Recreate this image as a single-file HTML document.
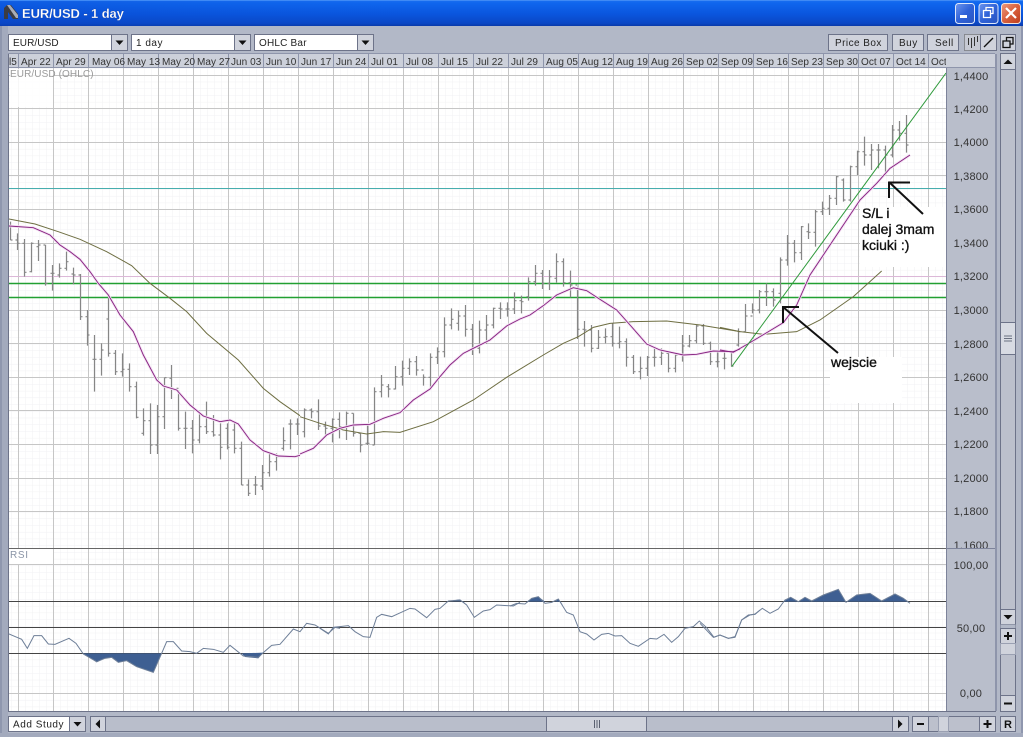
<!DOCTYPE html>
<html><head><meta charset="utf-8"><title>EUR/USD - 1 day</title>
<style>
html,body{margin:0;padding:0;width:1023px;height:737px;overflow:hidden;background:#b2b8c7}
svg{display:block}
text{font-family:"Liberation Sans",sans-serif;font-size:10px;fill:#222;letter-spacing:.1px}
.d text{letter-spacing:.05px;fill:#333}
.p text{font-size:11px;text-anchor:middle;letter-spacing:.2px;fill:#333}
.a text{font-size:14px;fill:#111;stroke:#111;stroke-width:.35px;letter-spacing:0}
.b{fill:#d0d3dc;stroke:#6d7389;stroke-width:1}
.w{fill:#fff;stroke:#6d7389;stroke-width:1}
</style></head><body>
<svg width="1023" height="737" viewBox="0 0 1023 737" xmlns="http://www.w3.org/2000/svg">
<defs>
<linearGradient id="tb" x1="0" y1="0" x2="0" y2="1"><stop offset="0" stop-color="#1b6ff0"/><stop offset=".12" stop-color="#0f66ee"/><stop offset=".55" stop-color="#0a55dd"/><stop offset=".9" stop-color="#0b47c4"/><stop offset="1" stop-color="#0a3aa8"/></linearGradient>
<linearGradient id="tb2" x1="0" y1="0" x2="1" y2="0"><stop offset="0" stop-color="#0a45c8" stop-opacity=".35"/><stop offset=".4" stop-color="#0a55dd" stop-opacity="0"/></linearGradient>
<linearGradient id="bl" x1="0" y1="0" x2="1" y2="1"><stop offset="0" stop-color="#6f97ee"/><stop offset=".5" stop-color="#2f62d8"/><stop offset="1" stop-color="#2a55c0"/></linearGradient>
<linearGradient id="rd" x1="0" y1="0" x2="1" y2="1"><stop offset="0" stop-color="#eb9a80"/><stop offset=".5" stop-color="#d8603c"/><stop offset="1" stop-color="#bd3c1c"/></linearGradient>
<pattern id="minor" x="11.5" y="75" width="7" height="6.72" patternUnits="userSpaceOnUse"><path d="M0 0V6.72M0 0H7" stroke="#f1f1f3" stroke-width="1" fill="none"/></pattern>
<clipPath id="main"><rect x="9" y="68" width="937" height="480"/></clipPath>
<clipPath id="rsi"><rect x="9" y="549" width="937" height="162"/></clipPath>
<clipPath id="ax"><rect x="9" y="54" width="937" height="14"/></clipPath>
<clipPath id="pl"><rect x="947" y="68" width="48" height="480"/></clipPath>
</defs>

<rect width="1023" height="737" fill="#b2b8c7"/>
<rect x="0" y="26" width="8" height="711" fill="#a3aabd"/>
<rect x="0" y="26" width="2" height="711" fill="#8f97ae"/>
<rect x="1021" y="26" width="2" height="711" fill="#8f97ae"/>
<rect x="0" y="733" width="1023" height="4" fill="#a3aabd"/>

<!-- title bar -->
<rect width="1023" height="26" fill="url(#tb)"/>
<rect width="1023" height="26" fill="url(#tb2)"/>
<rect y="0" width="1023" height="1" fill="#3f8af5"/>
<path d="M4 19V8L7 5H11L18 14V19H13L8 12V19Z" fill="#3c3c42"/>
<path d="M7 5H10L18 15V18L16 18Z" fill="#a9acb6"/>
<text x="22" y="18" style="font-size:13px;font-weight:bold;fill:#fff;letter-spacing:-.1px" stroke="#0a2a80" stroke-width=".15">EUR/USD - 1 day</text>
<rect x="955.5" y="3.5" width="19" height="20" rx="3" fill="url(#bl)" stroke="#dfe8fa"/>
<rect x="960" y="15" width="7" height="3" fill="#fff"/>
<rect x="979" y="3.5" width="19" height="20" rx="3" fill="url(#bl)" stroke="#dfe8fa"/>
<path d="M986 10.5V7.5H993V13.5H990.5M983.5 10.5H990.5V17.5H983.5Z" fill="none" stroke="#fff" stroke-width="1.3"/>
<rect x="1001.5" y="3.5" width="19" height="20" rx="3" fill="url(#rd)" stroke="#f0e4dc"/>
<path d="M1006 8L1016 18M1016 8L1006 18" stroke="#fff" stroke-width="2.2"/>

<!-- toolbar -->
<rect class="w" x="8.5" y="34.5" width="103" height="16"/><rect class="b" x="111.5" y="34.5" width="16" height="16"/><path d="M115.5 40.5h8l-4 4.5z" fill="#111"/>
<text x="13" y="46">EUR/USD</text>
<rect class="w" x="131.5" y="34.5" width="103" height="16"/><rect class="b" x="234.5" y="34.5" width="16" height="16"/><path d="M238.5 40.5h8l-4 4.5z" fill="#111"/>
<text x="136" y="46" style="letter-spacing:.5px">1 day</text>
<rect class="w" x="254.5" y="34.5" width="103" height="16"/><rect class="b" x="357.5" y="34.5" width="16" height="16"/><path d="M361.5 40.5h8l-4 4.5z" fill="#111"/>
<text x="259" y="46" style="letter-spacing:.2px">OHLC Bar</text>
<rect class="b" x="828.5" y="34.5" width="59" height="16"/><text x="835" y="46" style="letter-spacing:.45px">Price Box</text>
<rect class="b" x="892.5" y="34.5" width="31" height="16"/><text x="899" y="46" style="letter-spacing:.5px">Buy</text>
<rect class="b" x="927.5" y="34.5" width="31" height="16"/><text x="935" y="46" style="letter-spacing:.5px">Sell</text>
<rect x="964.5" y="34.5" width="16" height="16" fill="#c6c9d3" stroke="#555" stroke-dasharray="1 1"/>
<path d="M968.5 38V45M971.5 38V48M974.5 37V46M977.5 36V42" stroke="#333" stroke-width="1"/>
<rect class="b" x="980.5" y="34.5" width="16" height="16"/><path d="M984 47L993 38" stroke="#111" stroke-width="1.3"/>
<rect class="b" x="1000.5" y="34.5" width="15" height="16"/><path d="M1006.5 41V37.5H1013V44H1010M1003 41H1010V47.5H1003Z" fill="#d0d3dc" stroke="#111" stroke-width="1.3"/>

<!-- right columns -->
<rect x="947" y="54" width="48" height="657" fill="#b9becb"/>
<rect x="995" y="54" width="2" height="657" fill="#8e95ab"/>
<rect x="8" y="54" width="987" height="14" fill="#ccd0da"/>
<rect x="8" y="53" width="987" height="1" fill="#8e95ab"/>
<rect x="8" y="67" width="987" height="1" fill="#8e95ab"/>

<!-- chart bg -->
<rect x="8" y="68" width="939" height="643" fill="#fff"/>
<rect x="9" y="68" width="937" height="643" fill="url(#minor)"/>
<rect x="8" y="54" width="1" height="658" fill="#6d7389"/>
<rect x="8" y="711" width="988" height="1" fill="#6d7389"/>
<rect x="946" y="68" width="1" height="643" fill="#7d839a"/>

<!-- date axis -->
<g clip-path="url(#ax)" class="d">
<path d="M18.5 54V68M53.5 54V68M88.5 54V68M123.5 54V68M158.5 54V68M193.5 54V68M228.5 54V68M263.5 54V68M298.5 54V68M333.5 54V68M368.5 54V68M403.5 54V68M438.5 54V68M473.5 54V68M508.5 54V68M543.5 54V68M578.5 54V68M613.5 54V68M648.5 54V68M683.5 54V68M718.5 54V68M753.5 54V68M788.5 54V68M823.5 54V68M858.5 54V68M893.5 54V68M928.5 54V68" stroke="#8e95ab"/>
<text x="9" y="65">l5</text><text x="21" y="65">Apr 22</text><text x="56" y="65">Apr 29</text><text x="92" y="65">May 06</text><text x="127" y="65">May 13</text><text x="162" y="65">May 20</text><text x="197" y="65">May 27</text><text x="231" y="65">Jun 03</text><text x="266" y="65">Jun 10</text><text x="301" y="65">Jun 17</text><text x="336" y="65">Jun 24</text><text x="371" y="65">Jul 01</text><text x="406" y="65">Jul 08</text><text x="441" y="65">Jul 15</text><text x="476" y="65">Jul 22</text><text x="511" y="65">Jul 29</text><text x="546" y="65">Aug 05</text><text x="581" y="65">Aug 12</text><text x="616" y="65">Aug 19</text><text x="651" y="65">Aug 26</text><text x="686" y="65">Sep 02</text><text x="721" y="65">Sep 09</text><text x="756" y="65">Sep 16</text><text x="791" y="65">Sep 23</text><text x="826" y="65">Sep 30</text><text x="861" y="65">Oct 07</text><text x="896" y="65">Oct 14</text><text x="931" y="65">Oct</text>
</g>

<!-- grid -->
<path d="M18.5 68V711M53.5 68V711M88.5 68V711M123.5 68V711M158.5 68V711M193.5 68V711M228.5 68V711M263.5 68V711M298.5 68V711M333.5 68V711M368.5 68V711M403.5 68V711M438.5 68V711M473.5 68V711M508.5 68V711M543.5 68V711M578.5 68V711M613.5 68V711M648.5 68V711M683.5 68V711M718.5 68V711M753.5 68V711M788.5 68V711M823.5 68V711M858.5 68V711M893.5 68V711M928.5 68V711" stroke="#c6c6c6" fill="none"/>
<path d="M9 75.5H946M9 108.5H946M9 142.5H946M9 175.5H946M9 209.5H946M9 243.5H946M9 310.5H946M9 343.5H946M9 377.5H946M9 410.5H946M9 444.5H946M9 478.5H946M9 511.5H946M9 564.5H946M9 693.5H946" stroke="#c6c6c6" fill="none"/>

<!-- patches -->
<rect x="10" y="69" width="43" height="38" fill="#fff" opacity=".85"/>
<rect x="9" y="549" width="44" height="15" fill="#fff"/>

<!-- horizontals -->
<path d="M9 276.5H946" stroke="#dcb8d8"/>
<path d="M9 188.5H946" stroke="#47aeae"/>
<path d="M9 283.500H946M9 297.500H946" stroke="#22a032" stroke-width="1.4"/>
<rect x="9" y="548" width="937" height="1" fill="#666"/>

<g clip-path="url(#main)">
<!-- bars A -->
<g transform="translate(0,200) scale(.33333)" stroke="#868686" stroke-width="3.6" fill="none">
<path d="M31.5 65V120M31.5 120h6M52.5 100V150M46.5 120h6M52.5 130h6M73.5 117V230M67.5 130h6M73.5 217h6M94.5 127V217M88.5 215h6M94.5 130h6M115.5 120V183M109.5 140h6M115.5 135h6M136.5 135V257M130.5 135h6M136.5 250h6M157.5 195V272M151.5 220h6M157.5 220h6M178.5 190V233M172.5 225h6M178.5 205h6M199.5 155V212M193.5 205h6M199.5 185h6M220.5 203V253M214.5 222h6M220.5 225h6M241.5 222V360M235.5 225h6M241.5 350h6M262.5 330V437M256.5 350h6M262.5 405h6M283.5 405V575M277.5 478h6M283.5 478h6M304.5 430V527M298.5 478h6M304.5 450h6M325.5 290V470M319.5 357h6M325.5 460h6M346.5 450V525M340.5 460h6M346.5 515h6M367.5 460V530M361.5 515h6M367.5 508h6M388.5 490V575M382.5 508h6M388.5 560h6M409.5 545V655M403.5 560h6M409.5 652h6M430.5 625V707M424.5 700h6M430.5 662h6M451.5 610V762M445.5 662h6M451.5 735h6M472.5 615V762M466.5 735h6M472.5 650h6M493.5 533V687M487.5 650h6M493.5 533h6M514.5 495V597M508.5 535h6M514.5 565h6M535.5 570V692M529.5 565h6M535.5 685h6M556.5 635V747M550.5 685h6M556.5 685h6M577.5 660V760M571.5 685h6M577.5 720h6M598.5 640V730M592.5 720h6M598.5 680h6M619.5 605V702M613.5 680h6M619.5 695h6M640.5 645V710M634.5 695h6M640.5 705h6M661.5 670V778M655.5 705h6M661.5 742h6M682.5 670V748M676.5 685h6M682.5 742h6M703.5 665V760M697.5 690h6M703.5 745h6M724.5 725V855M718.5 745h6M724.5 855h6M745.5 838V888M739.5 855h6M745.5 880h6M766.5 828V885M760.5 855h6M766.5 855h6M787.5 795V870M781.5 858h6M787.5 818h6M808.5 760V830M802.5 818h6M808.5 785h6M829.5 760V812M823.5 785h6M829.5 770h6M850.5 682V752M844.5 745h6M850.5 722h6M871.5 658V748M865.5 672h6M871.5 672h6M892.5 655V705M886.5 672h6M892.5 672h6"/>
</g>
<!-- bars B -->
<g transform="translate(300,240) scale(.33333)" stroke="#868686" stroke-width="3.6" fill="none">
<path d="M13.5 505V592M7.5 575h6M13.5 510h6M34.5 505V535M28.5 510h6M34.5 515h6M55.5 478V570M49.5 515h6M55.5 558h6M76.5 545V590M70.5 558h6M76.5 565h6M97.5 535V607M91.5 565h6M97.5 538h6M118.5 517V595M112.5 538h6M118.5 560h6M139.5 515V600M133.5 560h6M139.5 520h6M160.5 520V590M154.5 520h6M160.5 580h6M181.5 580V637M175.5 580h6M181.5 615h6M202.5 555V615M196.5 610h6M202.5 610h6M223.5 442V615M217.5 615h6M223.5 455h6M244.5 405V472M238.5 455h6M244.5 435h6M265.5 432V472M259.5 440h6M265.5 447h6M286.5 378V448M280.5 447h6M286.5 410h6M307.5 362V437M301.5 410h6M307.5 385h6M328.5 355V405M322.5 385h6M328.5 365h6M349.5 348V407M343.5 365h6M349.5 390h6M370.5 403V437M364.5 390h6M370.5 412h6M391.5 340V447M385.5 412h6M391.5 352h6M412.5 322V372M406.5 352h6M412.5 335h6M433.5 232V352M427.5 335h6M433.5 255h6M454.5 205V268M448.5 255h6M454.5 238h6M475.5 212V272M469.5 250h6M475.5 228h6M496.5 195V290M490.5 228h6M496.5 268h6M517.5 252V345M511.5 268h6M517.5 325h6M538.5 242V340M532.5 325h6M538.5 270h6M559.5 225V312M553.5 270h6M559.5 255h6M580.5 203V265M574.5 255h6M580.5 205h6M601.5 187V237M595.5 205h6M601.5 207h6M622.5 187V230M616.5 207h6M622.5 207h6M643.5 157V222M637.5 207h6M643.5 182h6M664.5 167V220M658.5 182h6M664.5 185h6M685.5 112V182M679.5 170h6M685.5 125h6M706.5 75V137M700.5 125h6M706.5 100h6M727.5 90V147M721.5 100h6M727.5 130h6M748.5 90V150M742.5 130h6M748.5 110h6M769.5 40V128M763.5 115h6M769.5 65h6M790.5 55V140M784.5 65h6M790.5 128h6M811.5 92V172M805.5 128h6M811.5 135h6M832.5 140V297M826.5 135h6M832.5 268h6M853.5 243V320M847.5 268h6M853.5 270h6M874.5 255V337M868.5 270h6M874.5 325h6M895.5 270V327M889.5 325h6M895.5 292h6M916.5 265V310M910.5 292h6M916.5 290h6M937.5 250V320M931.5 290h6M937.5 310h6M958.5 260V325M952.5 310h6M958.5 305h6M979.5 295V380M973.5 305h6M979.5 352h6M1000.5 345V402M994.5 352h6M1000.5 395h6M1021.5 350V418M1015.5 395h6M1021.5 385h6M1042.5 348V408M1036.5 385h6M1042.5 352h6M1063.5 325V380M1057.5 352h6M1063.5 352h6M1084.5 325V375M1078.5 352h6M1084.5 340h6M1105.5 335V397M1099.5 340h6M1105.5 385h6M1126.5 345V397M1120.5 385h6M1126.5 345h6M1147.5 285V365M1141.5 345h6M1147.5 318h6M1168.5 285V322M1162.5 318h6M1168.5 302h6M1189.5 255V310M1183.5 302h6M1189.5 258h6M1210.5 252V315M1204.5 258h6M1210.5 310h6M1231.5 305V375M1225.5 310h6M1231.5 365h6M1252.5 335V382M1246.5 365h6M1252.5 365h6"/>
</g>
<!-- bars C -->
<g transform="translate(720,100) scale(.33333)" stroke="#868686" stroke-width="3.6" fill="none">
<path d="M13.5 750V808M7.5 775h6M13.5 775h6M34.5 755V800M28.5 755h6M34.5 798h6M55.5 685V740M49.5 735h6M55.5 695h6M76.5 612V695M70.5 695h6M76.5 648h6M97.5 610V640M91.5 648h6M97.5 630h6M118.5 570V640M112.5 630h6M118.5 575h6M139.5 550V618M133.5 575h6M139.5 575h6M160.5 565V620M154.5 575h6M160.5 600h6M181.5 472V610M175.5 580h6M181.5 480h6M202.5 405V497M196.5 480h6M202.5 430h6M223.5 420V487M217.5 430h6M223.5 458h6M244.5 378V480M238.5 458h6M244.5 380h6M265.5 370V417M259.5 395h6M265.5 397h6M286.5 330V440M280.5 397h6M286.5 335h6M307.5 305V345M301.5 335h6M307.5 325h6M328.5 285V345M322.5 325h6M328.5 295h6M349.5 228V315M343.5 295h6M349.5 230h6M370.5 235V305M364.5 240h6M370.5 300h6M391.5 197V305M385.5 300h6M391.5 200h6M412.5 152V225M406.5 200h6M412.5 155h6M433.5 110V197M427.5 155h6M433.5 165h6M454.5 132V210M448.5 165h6M454.5 150h6M475.5 132V205M469.5 150h6M475.5 150h6M496.5 137V225M490.5 150h6M496.5 165h6M517.5 75V172M511.5 165h6M517.5 90h6M538.5 63V122M532.5 90h6M538.5 100h6M559.5 45V158M553.5 100h6M559.5 135h6"/>
</g>

<!-- olive MA -->
<g stroke="#6e6e42" stroke-width="3" fill="none">
<polyline transform="translate(0,200) scale(.33333)" points="27,57 105,72 175,95 240,118 320,155 395,197 450,250 510,295 560,335 620,400 715,480 790,565 840,605 900,647"/>
<polyline transform="translate(300,240) scale(.33333)" points="0,530 60,550 130,570 200,582 250,575 300,577 400,545 520,480 620,412 730,345 790,310 835,290 880,262 930,250 1000,245 1100,243 1200,255 1320,275"/>
<polyline transform="translate(720,100) scale(.33333)" points="0,682 60,695 130,703 230,695 300,660 400,590 485,513"/>
</g>
<!-- magenta MA -->
<g stroke="#f3e0f3" stroke-width="8" fill="none">
<polyline transform="translate(0,200) scale(.33333)" points="27,78 100,83 150,105 180,135 210,155 240,178 270,215 295,250 325,285 360,345 400,395 430,465 470,540 490,558 530,570 570,615 610,648 660,665 690,660 715,672 750,720 790,752 835,768 885,770 900,766"/>
<polyline transform="translate(300,240) scale(.33333)" points="0,642 40,625 80,585 120,565 160,555 210,553 250,535 300,518 340,480 390,447 420,410 450,375 490,340 520,325 570,300 620,258 660,237 690,225 730,197 770,165 820,143 860,152 900,178 950,210 990,255 1040,312 1080,330 1150,345 1190,343 1240,333 1300,335 1320,327"/>
<polyline transform="translate(720,100) scale(.33333)" points="0,750 40,757 90,728 190,668 230,615 270,525 350,405 420,300 470,250 510,205 570,165"/>
</g>
<g stroke="#85207f" stroke-width="2.7" fill="none">
<polyline transform="translate(0,200) scale(.33333)" points="27,78 100,83 150,105 180,135 210,155 240,178 270,215 295,250 325,285 360,345 400,395 430,465 470,540 490,558 530,570 570,615 610,648 660,665 690,660 715,672 750,720 790,752 835,768 885,770 900,766"/>
<polyline transform="translate(300,240) scale(.33333)" points="0,642 40,625 80,585 120,565 160,555 210,553 250,535 300,518 340,480 390,447 420,410 450,375 490,340 520,325 570,300 620,258 660,237 690,225 730,197 770,165 820,143 860,152 900,178 950,210 990,255 1040,312 1080,330 1150,345 1190,343 1240,333 1300,335 1320,327"/>
<polyline transform="translate(720,100) scale(.33333)" points="0,750 40,757 90,728 190,668 230,615 270,525 350,405 420,300 470,250 510,205 570,165"/>
</g>
<!-- trend -->
<path d="M731.7 366.7L946 73" stroke="#2f9a3c" fill="none"/>

<!-- annotations -->
<rect x="860" y="207" width="86" height="60" fill="#fff"/>
<rect x="830" y="357" width="72" height="46" fill="#fff"/>
<path d="M782 307H799M783 306V323M783 307L838 353" stroke="#111" stroke-width="2" fill="none"/>
<path d="M888 182.5H910M889 182V198M889 182L923 214" stroke="#111" stroke-width="2" fill="none"/>
<g class="a">
<text x="862" y="218">S/L i</text>
<text x="862" y="234">dalej 3mam</text>
<text x="862" y="250">kciuki :)</text>
<text x="831" y="367">wejscie</text>
</g>
<text x="10" y="77" style="fill:#9a9a9a;letter-spacing:.1px">EUR/USD (OHLC)</text>
</g>

<!-- price labels -->
<g class="p" clip-path="url(#pl)">
<text x="971" y="80">1,4400</text><text x="971" y="113">1,4200</text><text x="971" y="146">1,4000</text><text x="971" y="180">1,3800</text><text x="971" y="213">1,3600</text><text x="971" y="247">1,3400</text><text x="971" y="280">1,3200</text><text x="971" y="314">1,3000</text><text x="971" y="348">1,2800</text><text x="971" y="381">1,2600</text><text x="971" y="415">1,2400</text><text x="971" y="448">1,2200</text><text x="971" y="482">1,2000</text><text x="971" y="515">1,1800</text><text x="971" y="549">1,1600</text>
</g>
<rect x="947" y="548" width="48" height="1" fill="#7d839a"/>
<g class="p">
<text x="971" y="569">100,00</text><text x="971" y="632">50,00</text><text x="971" y="697">0,00</text>
</g>

<!-- RSI -->
<g clip-path="url(#rsi)">
<text x="10" y="558" style="fill:#8a94a6;letter-spacing:.7px;font-size:10px">RSI</text>
<path d="M9 601.5H946M9 627.5H946M9 653.5H946" stroke="#444" fill="none"/>
<g fill="#3e5f92" stroke="none">
<polygon transform="translate(0,540) scale(.33333)" points="250,340 290,367 315,355 335,352 355,367 380,362 410,380 460,397 485,340"/>
<polygon transform="translate(0,540) scale(.33333)" points="725,340 735,351 775,355 790,338"/>
<polygon transform="translate(700,540) scale(.33333)" points="250,185 272,172 295,185 315,172 335,184 370,165 415,148 438,187 470,165 510,160 545,184 585,162 610,175 630,190 620,185"/>
<polygon transform="translate(320,585) scale(.33333)" points="380,49 420,43 440,60 430,49"/>
<polygon transform="translate(510,585) scale(.33333)" points="50,50 65,40 85,35 105,50"/>
<polygon transform="translate(510,585) scale(.33333)" points="135,50 145,42 160,62 152,50"/>
</g>
<g stroke="#6e7f98" stroke-width="3" fill="none">
<polyline transform="translate(0,540) scale(.33333)" points="27,282 65,298 82,325 102,287 125,287 145,312 165,313 207,295 228,310 250,342 290,365 315,355 335,352 355,367 380,362 410,380 460,397 485,340 500,305 520,305 545,333 570,335 590,340 610,325 640,328 670,337 690,316 730,348 775,352 790,338 815,316 840,313 880,267 900,275 920,250 945,255 985,280 1005,262 1020,265"/>
<polyline transform="translate(320,585) scale(.33333)" points="0,130 25,147 40,127 85,122 105,140 130,155 150,157 170,97 185,88 215,95 270,70 285,72 320,98 345,73 360,70 385,48 420,45 440,60 463,97 490,78 510,74 530,60 580,63 600,52"/>
<polyline transform="translate(510,585) scale(.33333)" points="0,63 20,55 45,57 65,40 85,35 105,55 125,52 145,42 170,82 190,90 210,140 230,147 252,165 275,148 295,145 315,153 335,152 360,175 385,184 420,160 440,162 462,148 485,172 505,155 525,130 550,125 568,108 590,128 612,157 630,150 655,160 675,155 695,105 715,90 735,88 750,75"/>
<polyline transform="translate(700,540) scale(.33333)" points="0,250 40,292 60,285 85,295 105,292 125,240 150,225 165,222 187,205 210,220 235,207 255,180 272,172 295,185 315,172 335,183 370,165 415,148 438,187 470,165 510,160 545,183 585,162 610,175 630,190"/>
</g>
</g>

<!-- vertical scroll -->
<rect x="1000.5" y="53.5" width="15" height="658" fill="#bcc0cc" stroke="#6d7389"/>
<rect class="b" x="1000.5" y="53.5" width="15" height="16"/><path d="M1003.5 64h9l-4.5-4.500z" fill="#111"/>
<rect x="1000.5" y="322.5" width="15" height="32" fill="#d8dbe3" stroke="#6d7389"/>
<path d="M1004 336H1012M1004 338.5H1012M1004 341H1012" stroke="#6a7080"/>
<rect class="b" x="1000.5" y="609.5" width="15" height="15"/><path d="M1003.5 615h9l-4.5 4.500z" fill="#111"/>
<rect x="1000.5" y="624.5" width="15" height="4" fill="#b2b8c7" stroke="none"/>
<rect class="b" x="1000.5" y="628.5" width="15" height="15"/><path d="M1004 636H1012M1008 632V640" stroke="#111" stroke-width="2"/>
<rect x="1000.5" y="643.5" width="15" height="11" fill="#d0d3dc" stroke="#9aa0b2"/>
<rect class="b" x="1000.5" y="695.5" width="15" height="16"/><path d="M1004 703.5H1012" stroke="#111" stroke-width="2"/>

<!-- bottom bar -->
<rect class="w" x="8.5" y="716.5" width="61" height="15"/><text x="13" y="727.500" style="letter-spacing:.55px">Add Study</text>
<rect class="b" x="69.5" y="716.5" width="16" height="15"/><path d="M73.5 722h8l-4 4.500z" fill="#111"/>
<rect x="105.5" y="716.5" width="787" height="15" fill="#b9becb" stroke="#6d7389"/>
<rect class="b" x="90.5" y="716.5" width="15" height="15"/><path d="M100 719.5v9l-4.5-4.500z" fill="#111"/>
<rect x="546.5" y="716.5" width="100" height="15" fill="#d0d3dc" stroke="#6d7389"/>
<path d="M594.5 720V728M597 720V728M599.5 720V728" stroke="#5a6070"/>
<rect class="b" x="892.5" y="716.5" width="16" height="15"/><path d="M898 719.5v9l4.500-4.500z" fill="#111"/>
<rect x="912.5" y="716.5" width="83" height="15" fill="#bcc0cc" stroke="#6d7389"/>
<rect class="b" x="912.5" y="716.5" width="16" height="15"/><path d="M917 724H924" stroke="#111" stroke-width="2"/>
<rect x="938.5" y="716.5" width="10" height="15" fill="#d0d3dc" stroke="#9aa0b2"/>
<rect class="b" x="979.5" y="716.5" width="16" height="15"/><path d="M983.5 724H991.5M987.5 720V728" stroke="#111" stroke-width="2"/>
<rect class="b" x="1000.5" y="716.5" width="15" height="15"/><text x="1004" y="728" style="font-size:11px;font-weight:bold;fill:#111;letter-spacing:0">R</text>
</svg>
</body></html>
